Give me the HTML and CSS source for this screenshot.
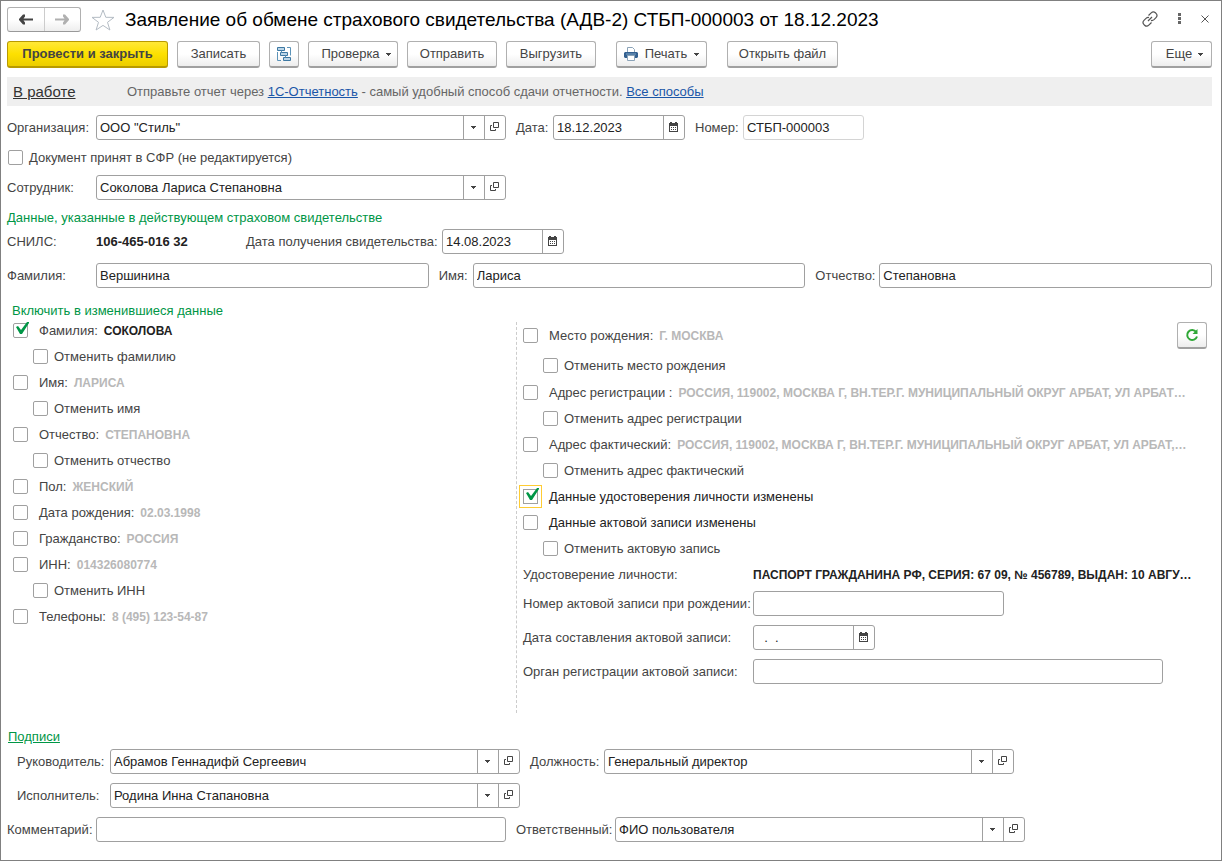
FILE: index.html
```html
<!DOCTYPE html>
<html lang="ru">
<head>
<meta charset="utf-8">
<meta name="viewport" content="width=device-width, initial-scale=1">
<title>Заявление об обмене страхового свидетельства (АДВ-2)</title>
<link rel="stylesheet" href="styles.css">
</head>
<body>
<svg class="sprite" aria-hidden="true">
  <symbol id="i-open" viewBox="0 0 9 10"><path d="M3.5.5h5v5h-5zM2 3.500H.5v5h5V7" fill="none" stroke="#444"/></symbol>
  <symbol id="i-cal" viewBox="0 0 9 10"><path d="M0 1h1V0h2v1h3V0h2v1h1v9H0z" fill="#444"/><path d="M1 4h7v5H1z" fill="#fff"/><path d="M2 5h1v1H2zm2 0h1v1H4zm2 0h1v1H6zM2 7h1v1H2zm2 0h1v1H4zm2 0h1v1H6z" fill="#444"/></symbol>
  <symbol id="i-down" viewBox="0 -1 5 4"><path d="M0 0h5v1H4v1H3v1H2V2H1V1H0z" fill="#444"/></symbol>
</svg>
<main class="window">
  <header class="titlebar">
    <div class="nav">
      <button type="button" aria-label="Назад"><svg width="14" height="11" viewBox="0 0 14 11"><path d="M4 .5h2v2L4.500 4.500H14v2H4.500L6 8.500v2H4L0 6V5z" fill="#444"/></svg></button>
      <button type="button" aria-label="Вперед"><svg width="14" height="11" viewBox="0 0 14 11"><path d="M10 .5H8v2l1.500 2H0v2h9.500L8 8.500v2h2L14 6V5z" fill="#b0b0b0"/></svg></button>
    </div>
    <button type="button" class="plain" aria-label="В избранное"><svg width="24" height="22" viewBox="0 0 24 22"><path d="M12 1l2.800 7.300 8.200.1-6.500 4.900 2.400 7.700-6.900-4.600L5.100 21l2.400-7.700L1 8.400l8.200-.1z" fill="#fff" stroke="#b4bcc4"/></svg></button>
    <h1>Заявление об обмене страхового свидетельства (АДВ-2) СТБП-000003 от 18.12.2023</h1>
    <div class="tools">
      <button type="button" class="plain" aria-label="Ссылка"><svg width="16" height="16" viewBox="0 0 16 16"><path d="M6.500 4.500l2.700-2.700a3 3 0 0 1 4.200 0l.6.600a3 3 0 0 1 0 4.200L12 8.600q-1.500 1.300-3 .8M9.500 11.500l-2.700 2.700a3 3 0 0 1-4.200 0l-.6-.6a3 3 0 0 1 0-4.200L4 7.400q1.500-1.300 3-.8M6 10l4-4" fill="none" stroke="#555" stroke-width="1.200"/></svg></button>
      <button type="button" class="plain" aria-label="Меню"><svg width="3" height="11" viewBox="0 0 3 11"><path d="M0 0h3v3H0zm0 4h3v3H0zm0 4h3v3H0z" fill="#666"/></svg></button>
      <button type="button" class="plain" aria-label="Закрыть"><svg width="8" height="8" viewBox="0 0 8 8"><path d="M.5.500l7 7m0-7l-7 7" stroke="#555"/></svg></button>
    </div>
  </header>

  <div class="toolbar">
    <button type="button" class="btn primary">Провести и закрыть</button>
    <button type="button" class="btn b-save">Записать</button>
    <button type="button" class="btn square" aria-label="Структура подчиненности"><svg width="14" height="14" viewBox="0 0 14 14"><path d="M.5.500h7v3h-7zm3 5h7v3h-7zm3 5h7v3h-7z" fill="#bcd6e8" stroke="#3d78a3"/><path d="M4.500 3.500v2m4 3v2M10 .500h3.500v8M.5 5v8.500H4" fill="none" stroke="#5c93b8"/></svg></button>
    <button type="button" class="btn b-menu">Проверка <svg width="5" height="4"><use href="#i-down"/></svg></button>
    <button type="button" class="btn b-wide">Отправить</button>
    <button type="button" class="btn b-wide">Выгрузить</button>
    <button type="button" class="btn b-print"><svg width="14" height="14" viewBox="0 0 14 14"><path d="M3.500 5V.500h5l2 2V5" fill="#fff" stroke="#8ba3b8"/><path d="M1 5h12l1 1v4l-1 1H1l-1-1V6z" fill="#336090"/><path d="M2 7h10" stroke="#7fa3c4"/><path d="M3.500 8.500h7v5h-7z" fill="#fff" stroke="#8ba3b8"/></svg><span>Печать</span><svg width="5" height="4"><use href="#i-down"/></svg></button>
    <button type="button" class="btn b-file">Открыть файл</button>
    <button type="button" class="btn b-more">Еще <svg width="5" height="4"><use href="#i-down"/></svg></button>
  </div>

  <div class="notice">
    <a href="#status" class="status">В работе</a>
    <p>Отправьте отчет через <a href="#report">1С-Отчетность</a> - самый удобный способ сдачи отчетности. <a href="#ways">Все способы</a></p>
  </div>

  <form class="form">
    <div class="row">
      <label class="lead" for="org">Организация:</label>
      <div class="field wide"><input id="org" type="text" value="ООО &quot;Стиль&quot;"><button type="button" aria-label="Выбрать организацию"><svg width="5" height="4"><use href="#i-down"/></svg></button><button type="button" aria-label="Открыть организацию"><svg width="9" height="10"><use href="#i-open"/></svg></button></div>
      <label class="l-date" for="date">Дата:</label>
      <div class="field date doc-date"><input id="date" type="text" value="18.12.2023"><button type="button" aria-label="Календарь"><svg width="9" height="10"><use href="#i-cal"/></svg></button></div>
      <label class="l-num" for="num">Номер:</label>
      <div class="field number"><input id="num" type="text" value="СТБП-000003" readonly></div>
    </div>
    <div class="row accepted"><input type="checkbox" id="acc"><label for="acc">Документ принят в СФР (не редактируется)</label></div>
    <div class="row">
      <label class="lead" for="emp">Сотрудник:</label>
      <div class="field wide"><input id="emp" type="text" value="Соколова Лариса Степановна"><button type="button" aria-label="Выбрать сотрудника"><svg width="5" height="4"><use href="#i-down"/></svg></button><button type="button" aria-label="Открыть сотрудника"><svg width="9" height="10"><use href="#i-open"/></svg></button></div>
    </div>

    <h2>Данные, указанные в действующем страховом свидетельстве</h2>
    <div class="row snils">
      <span class="lead">СНИЛС:</span>
      <strong>106-465-016 32</strong>
      <label class="l-got" for="got">Дата получения свидетельства:</label>
      <div class="field date"><input id="got" type="text" value="14.08.2023"><button type="button" aria-label="Календарь"><svg width="9" height="10"><use href="#i-cal"/></svg></button></div>
    </div>
    <div class="row">
      <label class="lead" for="fam">Фамилия:</label>
      <div class="field grow"><input id="fam" type="text" value="Вершинина"></div>
      <label class="l-name" for="name">Имя:</label>
      <div class="field grow"><input id="name" type="text" value="Лариса"></div>
      <label class="l-pat" for="pat">Отчество:</label>
      <div class="field grow"><input id="pat" type="text" value="Степановна"></div>
    </div>

    <h2 class="indent">Включить в изменившиеся данные</h2>
    <div class="columns">
      <div class="col left">
        <div class="item"><input type="checkbox" id="c1" checked><label for="c1">Фамилия:</label><b class="on">СОКОЛОВА</b></div>
        <div class="item sub"><input type="checkbox" id="c2"><label for="c2">Отменить фамилию</label></div>
        <div class="item"><input type="checkbox" id="c3"><label for="c3">Имя:</label><b>ЛАРИСА</b></div>
        <div class="item sub"><input type="checkbox" id="c4"><label for="c4">Отменить имя</label></div>
        <div class="item"><input type="checkbox" id="c5"><label for="c5">Отчество:</label><b>СТЕПАНОВНА</b></div>
        <div class="item sub"><input type="checkbox" id="c6"><label for="c6">Отменить отчество</label></div>
        <div class="item"><input type="checkbox" id="c7"><label for="c7">Пол:</label><b>ЖЕНСКИЙ</b></div>
        <div class="item"><input type="checkbox" id="c8"><label for="c8">Дата рождения:</label><b>02.03.1998</b></div>
        <div class="item"><input type="checkbox" id="c9"><label for="c9">Гражданство:</label><b>РОССИЯ</b></div>
        <div class="item"><input type="checkbox" id="c10"><label for="c10">ИНН:</label><b>014326080774</b></div>
        <div class="item sub"><input type="checkbox" id="c11"><label for="c11">Отменить ИНН</label></div>
        <div class="item"><input type="checkbox" id="c12"><label for="c12">Телефоны:</label><b>8 (495) 123-54-87</b></div>
      </div>
      <div class="col right">
        <div class="item first"><input type="checkbox" id="d1"><label for="d1">Место рождения:</label><b>Г. МОСКВА</b>
          <button type="button" class="btn square refresh" aria-label="Обновить"><svg width="14" height="14" viewBox="0 0 14 14"><path d="M11.200 4A5 5 0 1 0 12 8.500" fill="none" stroke="#2fa836" stroke-width="2"/><path d="M12.500 1v5h-5z" fill="#2fa836"/></svg></button></div>
        <div class="item sub second"><input type="checkbox" id="d2"><label for="d2">Отменить место рождения</label></div>
        <div class="item"><input type="checkbox" id="d3"><label for="d3">Адрес регистрации :</label><b>РОССИЯ, 119002, МОСКВА Г, ВН.ТЕР.Г. МУНИЦИПАЛЬНЫЙ ОКРУГ АРБАТ, УЛ АРБАТ…</b></div>
        <div class="item sub"><input type="checkbox" id="d4"><label for="d4">Отменить адрес регистрации</label></div>
        <div class="item"><input type="checkbox" id="d5"><label for="d5">Адрес фактический:</label><b>РОССИЯ, 119002, МОСКВА Г, ВН.ТЕР.Г. МУНИЦИПАЛЬНЫЙ ОКРУГ АРБАТ, УЛ АРБАТ,…</b></div>
        <div class="item sub"><input type="checkbox" id="d6"><label for="d6">Отменить адрес фактический</label></div>
        <div class="item dark"><input type="checkbox" id="d7" class="current" checked><label for="d7">Данные удостоверения личности изменены</label></div>
        <div class="item dark"><input type="checkbox" id="d8"><label for="d8">Данные актовой записи изменены</label></div>
        <div class="item sub"><input type="checkbox" id="d9"><label for="d9">Отменить актовую запись</label></div>
        <div class="item doc"><span class="act">Удостоверение личности:</span><b class="on">ПАСПОРТ ГРАЖДАНИНА РФ, СЕРИЯ: 67 09, № 456789, ВЫДАН: 10 АВГУ…</b></div>
        <div class="acts">
          <div class="row"><label class="act" for="actnum">Номер актовой записи при рождении:</label><div class="field actnum"><input id="actnum" type="text"></div></div>
          <div class="row"><label class="act" for="actdate">Дата составления актовой записи:</label><div class="field date"><input id="actdate" type="text" value="  .  ."><button type="button" aria-label="Календарь"><svg width="9" height="10"><use href="#i-cal"/></svg></button></div></div>
          <div class="row"><label class="act" for="actorg">Орган регистрации актовой записи:</label><div class="field wide"><input id="actorg" type="text"></div></div>
        </div>
      </div>
    </div>

    <a href="#sign" class="sign">Подписи</a>
    <div class="row signer">
      <label for="head">Руководитель:</label>
      <div class="field wide"><input id="head" type="text" value="Абрамов Геннадифй Сергеевич"><button type="button" aria-label="Выбрать руководителя"><svg width="5" height="4"><use href="#i-down"/></svg></button><button type="button" aria-label="Открыть руководителя"><svg width="9" height="10"><use href="#i-open"/></svg></button></div>
      <label class="l-post" for="post">Должность:</label>
      <div class="field wide"><input id="post" type="text" value="Генеральный директор"><button type="button" aria-label="Выбрать должность"><svg width="5" height="4"><use href="#i-down"/></svg></button><button type="button" aria-label="Открыть должность"><svg width="9" height="10"><use href="#i-open"/></svg></button></div>
    </div>
    <div class="row signer">
      <label for="exec">Исполнитель:</label>
      <div class="field wide"><input id="exec" type="text" value="Родина Инна Стапановна"><button type="button" aria-label="Выбрать исполнителя"><svg width="5" height="4"><use href="#i-down"/></svg></button><button type="button" aria-label="Открыть исполнителя"><svg width="9" height="10"><use href="#i-open"/></svg></button></div>
    </div>
    <div class="row">
      <label class="lead" for="comment">Комментарий:</label>
      <div class="field wide"><input id="comment" type="text"></div>
      <label class="l-resp" for="resp">Ответственный:</label>
      <div class="field wide"><input id="resp" type="text" value="ФИО пользователя"><button type="button" aria-label="Выбрать ответственного"><svg width="5" height="4"><use href="#i-down"/></svg></button><button type="button" aria-label="Открыть ответственного"><svg width="9" height="10"><use href="#i-open"/></svg></button></div>
    </div>
  </form>
</main>
</body>
</html>
```
FILE: styles.css
```css
* { box-sizing: border-box; }
body {
  margin: 0;
  background: #fff;
  color: #444;
  font: 13px/16px "Liberation Sans", Arial, sans-serif;
}
.sprite { position: absolute; width: 0; height: 0; }
.window {
  min-height: 100vh;
  padding: 6px 9px 12px 6px;
  border: 1px solid #808080;
}
button, input { font: inherit; color: inherit; margin: 0; }
button { display: flex; align-items: center; justify-content: center; padding: 0; cursor: pointer; }
button svg { flex: none; display: block; }
label, .lead, b, strong { white-space: nowrap; }

.titlebar { display: flex; align-items: center; height: 25px; }
.nav {
  display: flex;
  width: 74px;
  height: 25px;
  border: 1px solid #b0b0b0;
  border-bottom-color: #999;
  border-radius: 3px;
  background: linear-gradient(#fff 50%, #eee);
}
.nav button { flex: 1; border: 0; background: none; }
.nav button + button { border-left: 1px solid #ccc; }
.plain { border: 0; background: none; }
.titlebar > .plain { margin: 0 10px; }
h1 { margin: 0; color: #000; font-size: 19px; line-height: 24px; font-weight: 400; white-space: nowrap; }
.tools { display: flex; align-items: center; gap: 20px; margin: 0 3px 2px auto; }

.toolbar { display: flex; gap: 9px; margin-top: 9px; height: 27px; }
.btn {
  height: 27px;
  flex: none;
  border: 1px solid #b0b0b0;
  border-bottom: 2px solid #a0a0a0;
  border-radius: 3px;
  background: linear-gradient(#fff 50%, #ededed);
  white-space: nowrap;
}
.primary {
  width: 161px;
  border-color: #b89a00;
  background: linear-gradient(#ffe838, #fde000 50%, #eccd00);
  font-weight: 700;
}
.b-save { width: 83px; }
.square { width: 30px; }
.b-menu { width: 90px; gap: 6px; padding-left: 6px; }
.b-wide { width: 90px; }
.b-print { width: 91px; gap: 7px; margin-left: 11px; }
.b-file { width: 111px; margin-left: 11px; }
.b-more { width: 61px; gap: 6px; padding-left: 6px; margin-left: auto; }

.notice {
  display: flex;
  align-items: center;
  height: 29px;
  margin-top: 9px;
  padding-left: 6px;
  background: #efefef;
  color: #666;
}
.notice p { margin: 0; }
.notice a { color: #1a56a8; }
.notice .status { width: 114px; color: #333; font-size: 15px; }

.form { display: flex; flex-direction: column; gap: 9px; margin-top: 9px; }
.row { display: flex; align-items: center; min-height: 25px; }
.lead { flex: none; width: 89px; }
.field {
  display: flex;
  flex: none;
  height: 25px;
  border: 1px solid #a0a0a0;
  border-radius: 3px;
  background: #fff;
  color: #222;
  overflow: hidden;
}
.field input { flex: 1; min-width: 0; width: 100%; border: 0; padding: 0 3px; background: none; outline: 0; }
.field button { flex: none; width: 21px; padding: 0 1px 1px 0; border: 0; border-left: 1px solid #a0a0a0; background: none; }
.wide { flex: 0 1 410px; }
.date { width: 122px; }
.doc-date { width: 132px; }
.number { width: 121px; border-color: #d4d4d4; }
.grow { flex: 1 1 0; min-width: 0; }
.l-date { flex: none; width: 47px; padding-left: 10px; }
.l-num { flex: none; width: 58px; padding-left: 10px; }
.l-name { flex: none; width: 44px; padding-left: 10px; }
.l-pat { flex: none; width: 74px; padding-left: 10px; }
.l-post { flex: none; width: 84px; padding-left: 10px; }
.l-resp { flex: none; width: 109px; padding-left: 10px; }
.l-got { flex: none; width: 196px; }
.snils strong { width: 150px; color: #222; }

input[type="checkbox"] {
  appearance: none;
  position: relative;
  flex: none;
  width: 15px;
  height: 15px;
  border: 1px solid #a0a0a0;
  border-radius: 2px;
  background: #fff;
}
.item input[type="checkbox"] { margin-bottom: 1px; }
input[type="checkbox"]:checked::after {
  content: "";
  position: absolute;
  left: 2px;
  top: -2px;
  width: 13px;
  height: 12px;
  background: #009646;
  clip-path: polygon(0 5px, 2px 4px, 5px 8px, 11px 0, 13px 0, 13px 1px, 6px 12px, 4px 12px);
}
input.current[type="checkbox"] { border-radius: 0; outline: 1px solid #fc3; outline-offset: 3px; }
.accepted { gap: 6px; padding-left: 1px; min-height: 17px; }

h2 { margin: 0; padding-top: 1px; color: #009646; font-size: 13px; line-height: 16px; font-weight: 400; }
.form h2 + .snils { margin-top: -6px; }
.form .indent { margin: 5px 0 0 5px; }

.columns { display: grid; grid-template-columns: 509px minmax(0, 1fr); margin-top: -10px; }
.col { padding-left: 6px; }
.right { margin-top: 4px; min-height: 391px; border-left: 1px dashed #ccc; }
.item { display: flex; align-items: center; height: 26px; min-width: 0; }
.item label { flex: none; margin-left: 11px; }
.item b { margin-left: 6px; color: #b8b8b8; font-size: 12px; }
.item .on { color: #222; }
.item.sub { padding-left: 20px; }
.item.sub label { margin-left: 6px; }
.dark label { color: #222; }
.item.first { height: 28px; }
.item.second { height: 30px; padding-top: 2px; }
.refresh { align-self: flex-start; margin: 0 5px 0 auto; }
.act { flex: none; width: 230px; white-space: nowrap; }
.item.doc b { margin-left: 0; }
.acts { display: flex; flex-direction: column; gap: 9px; margin-top: 3px; }
.actnum { width: 251px; }

.sign { align-self: flex-start; margin: 7px 0 -5px 1px; color: #009646; }
.signer { padding-left: 10px; }
.signer label:first-child { flex: none; width: 93px; }
```
